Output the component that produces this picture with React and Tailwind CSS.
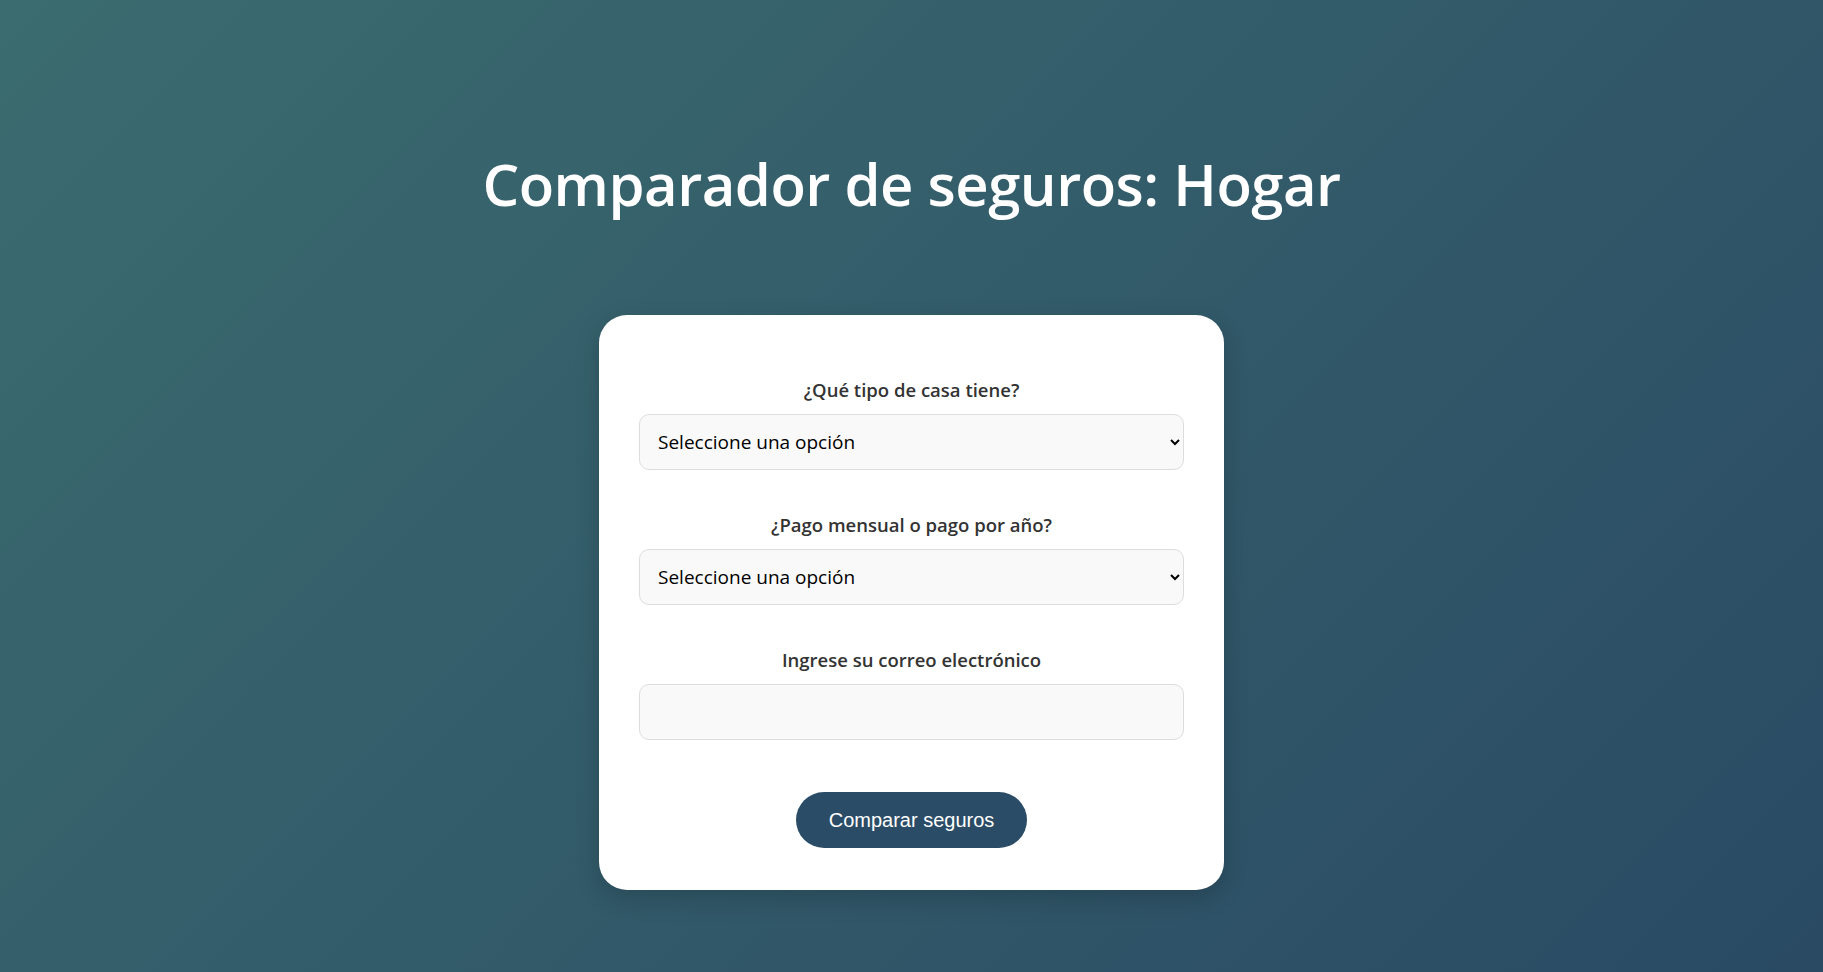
import React, { useState } from 'react'

function App() {
    const [form, setForm] = useState({ casa: '', pago: '', email: '' });

    const handleChange = (e) => {
        setForm((prev) => ({ ...prev, [e.target.name]: e.target.value }));
    };

    const fieldClass = "w-full h-[56px] pl-[14px] pr-2 text-[19px] text-black bg-[#f9f9f9] border border-[#dddddd] rounded-[10px] outline-none";
    const labelClass = "text-[18.5px] font-semibold text-[#333333] leading-[26px] mb-[11px]";

    return (
        <div className="min-h-screen w-full bg-[linear-gradient(135deg,#3b6c6f_0%,#2a4a64_100%)] flex flex-col items-center font-['Open_Sans',sans-serif]">
            <h1 className="mt-[146px] text-white text-[58px] font-semibold leading-[76px] tracking-[-0.5px]">
                Comparador de seguros: Hogar
            </h1>

            <div className="mt-[93px] w-[625px] bg-white rounded-[28px] shadow-[0_8px_24px_rgba(0,0,0,0.18)] px-[40px] pt-[62px] pb-[42px]">
                <form className="flex flex-col items-center">
                    <label className={labelClass}>¿Qué tipo de casa tiene?</label>
                    <select name="casa" value={form.casa} onChange={handleChange} className={fieldClass}>
                        <option value="">Seleccione una opción</option>
                        <option value="piso">Piso</option>
                        <option value="casa">Casa</option>
                    </select>

                    <label className={"mt-[42px] " + labelClass}>¿Pago mensual o pago por año?</label>
                    <select name="pago" value={form.pago} onChange={handleChange} className={fieldClass}>
                        <option value="">Seleccione una opción</option>
                        <option value="mensual">Mensual</option>
                        <option value="anual">Anual</option>
                    </select>

                    <label className={"mt-[42px] " + labelClass}>Ingrese su correo electrónico</label>
                    <input type="email" name="email" value={form.email} onChange={handleChange} className={fieldClass} />

                    <button
                        type="button"
                        className="mt-[52px] w-[231px] h-[56px] rounded-full bg-[#2b4c66] text-white text-[20px] font-['Liberation_Sans',Arial,sans-serif]"
                    >
                        Comparar seguros
                    </button>
                </form>
            </div>
        </div>
    )
}

export default App
